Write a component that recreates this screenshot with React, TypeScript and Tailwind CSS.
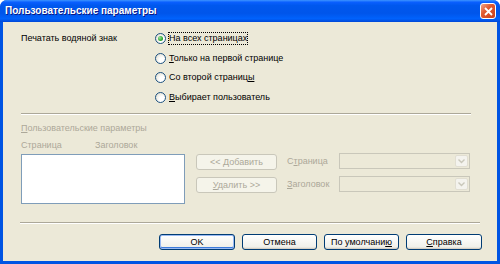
import type { ReactNode } from "react";

function Radio({ checked }: { checked?: boolean }) {
  return (
    <span className="w-[11px] h-[11px] rounded-full border border-[#1c5180] bg-[radial-gradient(circle_at_70%_70%,#ffffff_30%,#dcd9c9_100%)] flex items-center justify-center shrink-0">
      {checked && <span className="w-[5px] h-[5px] rounded-full bg-[radial-gradient(circle_at_35%_35%,#9be39b,#21a121_70%)]" />}
    </span>
  );
}

function Btn({ children, w, disabled, def }: { children: ReactNode; w: string; disabled?: boolean; def?: boolean }) {
  if (disabled) {
    return (
      <div className={`${w} h-[16px] rounded-[3px] border border-[#c9c7ba] bg-[#f5f4ea] flex items-center justify-center whitespace-pre text-[#aca899]`}>
        <span>{children}</span>
      </div>
    );
  }
  return (
    <div className={`${w} h-[16px] rounded-[3px] border border-[#003c74] bg-[linear-gradient(to_bottom,#ffffff,#f0f0ea_85%,#d6d0c5)] flex items-center justify-center whitespace-pre text-black ${def ? "shadow-[inset_0_0_0_1px_#99b9f2,inset_0_-1px_0_1px_#3d7bdb]" : "shadow-[inset_0_-1px_0_#d6d0c5]"}`}>
      <span>{children}</span>
    </div>
  );
}

function Combo() {
  return (
    <div className="w-[131px] h-[16px] border border-[#c9c7ba] bg-[#ece9d8] flex justify-end p-px">
      <div className="w-[13px] h-full rounded-[2px] bg-[#f4f3ee] border border-[#e1ded2] flex items-center justify-center">
        <svg width="7" height="5" viewBox="0 0 7 5">
          <path d="M0.5 0.5 L3.5 3.5 L6.5 0.5" fill="none" stroke="#c9c7ba" strokeWidth="1.4" />
        </svg>
      </div>
    </div>
  );
}

function Sep() {
  return (
    <div className="flex flex-col">
      <div className="h-px bg-[#aca899]" />
      <div className="h-px bg-white" />
    </div>
  );
}

export default function App() {
  return (
    <div className="w-[500px] h-[264px] bg-white font-['Liberation_Sans',Arial,sans-serif] text-[9px] leading-none select-none">
      <div className="w-[500px] h-[264px] rounded-t-[7px] bg-[#0054e3] flex flex-col overflow-hidden">
        {/* Title bar */}
        <div className="h-[22px] shrink-0 flex items-center justify-between pl-[5px] pr-[4px] bg-[linear-gradient(to_bottom,#3d95ff_0%,#0a5fff_10%,#0058ee_25%,#0055ea_60%,#0062fc_85%,#0047d6_100%)]">
          <span className="text-white font-bold text-[10px] [text-shadow:1px_1px_0_#0a1883]">
            Пользовательские параметры
          </span>
          <div className="w-[16px] h-[16px] rounded-[3px] border border-white bg-[linear-gradient(135deg,#f0a58a,#e15a30_40%,#c8401c)] flex items-center justify-center">
            <svg width="9" height="9" viewBox="0 0 9 9">
              <path d="M1 1 L8 8 M8 1 L1 8" stroke="white" strokeWidth="1.8" />
            </svg>
          </div>
        </div>

        {/* Body */}
        <div className="flex-1 mx-[3px] mb-[3px] bg-[#ece9d8] flex flex-col text-black">
          <div className="flex pt-[7px] pl-[18px]">
            <div className="w-[134px] h-[19.5px] flex items-center">Печатать водяной знак</div>
            <div className="flex flex-col">
              <div className="h-[19.5px] flex items-center gap-[2px]">
                <Radio checked />
                <span className="px-px py-[2px] outline outline-1 outline-dotted outline-black -outline-offset-1">
                  На всех страницах
                </span>
              </div>
              <div className="h-[19.5px] flex items-center gap-[3px]">
                <Radio />
                <span><u>Т</u>олько на первой странице</span>
              </div>
              <div className="h-[19.5px] flex items-center gap-[3px]">
                <Radio />
                <span>Со второй страниц<u>ы</u></span>
              </div>
              <div className="h-[19.5px] flex items-center gap-[3px]">
                <Radio />
                <span><u>В</u>ыбирает пользователь</span>
              </div>
            </div>
          </div>

          <div className="mt-[6px] ml-[18px] mr-[26px]">
            <Sep />
          </div>

          <div className="mt-[6px] ml-[18px] h-[14px] flex items-center text-[#aca899]">
            <span><u>П</u>ользовательские параметры</span>
          </div>
          <div className="mt-[3px] ml-[18px] h-[14px] flex items-center text-[#aca899]">
            <span className="w-[74px]">Страница</span>
            <span>Заголовок</span>
          </div>

          <div className="mt-[2px] ml-[18px] flex">
            <div className="w-[164px] h-[50px] bg-white border border-[#7f9db9]" />
            <div className="ml-[11px] flex flex-col gap-[7px]">
              <Btn w="w-[81px]" disabled>&lt;&lt; <u>Д</u>обавить</Btn>
              <Btn w="w-[81px]" disabled><u>У</u>далить &gt;&gt;</Btn>
            </div>
            <div className="ml-[10px] -mt-px flex flex-col gap-[7px] text-[#aca899]">
              <div className="flex items-center">
                <span className="w-[52px]">С<u>т</u>раница</span>
                <Combo />
              </div>
              <div className="flex items-center">
                <span className="w-[52px]"><u>З</u>аголовок</span>
                <Combo />
              </div>
            </div>
          </div>

          <div className="mt-[18px] ml-[17px] mr-[17px]">
            <Sep />
          </div>

          <div className="mt-[10px] pr-[15px] flex justify-end gap-[7px]">
            <Btn w="w-[76px]" def>OK</Btn>
            <Btn w="w-[75px]">Отмена</Btn>
            <Btn w="w-[75px]">По умолчани<u>ю</u></Btn>
            <Btn w="w-[76px]"><u>С</u>правка</Btn>
          </div>
        </div>
      </div>
    </div>
  );
}
